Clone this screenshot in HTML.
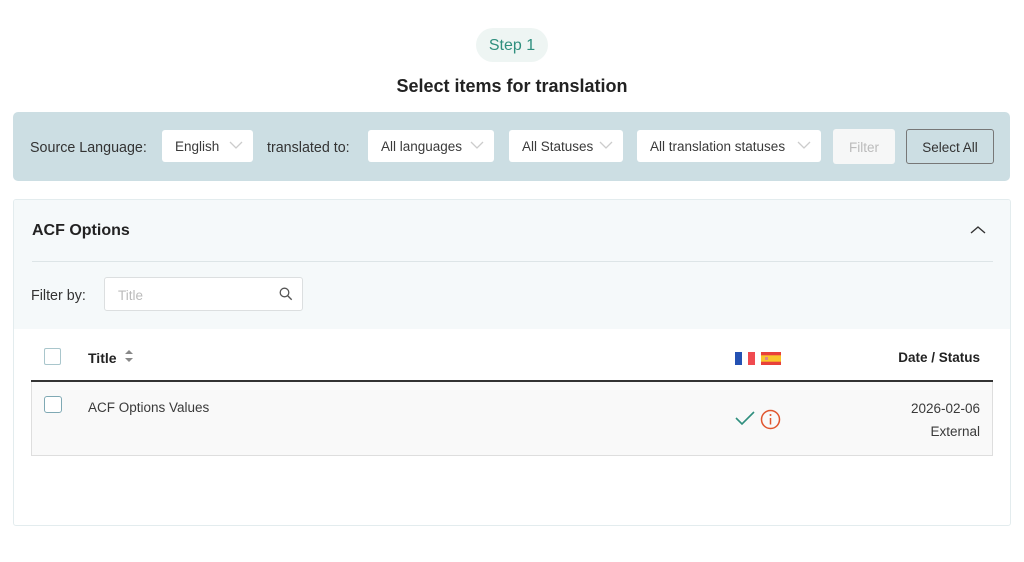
<!DOCTYPE html>
<html><head><meta charset="utf-8"><style>
*{box-sizing:border-box;margin:0;padding:0}
body{width:1024px;height:562px;background:#fff;font-family:"Liberation Sans",sans-serif;color:#333;position:relative;overflow:hidden}
.a{position:absolute}
.sel{position:absolute;background:#fff;border-radius:3px;height:32px;top:130px;font-size:13.5px;line-height:34px;padding-left:13px;color:#3a3a3a}
.sel svg{position:absolute;right:10px;top:11px}
</style></head><body>
<div class="a" style="left:476px;top:28px;width:72px;height:34px;border-radius:17px;background:#eef5f3;color:#2f8f7e;font-size:16px;line-height:36px;text-align:center">Step 1</div>
<div class="a" style="left:0;width:1024px;top:76px;text-align:center;font-size:18px;font-weight:bold;color:#222">Select items for translation</div>

<div class="a" style="left:13px;top:112px;width:997px;height:69px;background:#ccdee3;border-radius:5px"></div>
<div class="a" style="left:30px;top:140px;font-size:14.3px;color:#333">Source Language:</div>
<div class="sel" style="left:162px;width:91px">English<svg width="14" height="9"><path d="M1 1l6 6 6-6" fill="none" stroke="#ccc" stroke-width="1.3"/></svg></div>
<div class="a" style="left:267px;top:140px;font-size:14.3px;color:#333">translated to:</div>
<div class="sel" style="left:368px;width:126px">All languages<svg width="14" height="9"><path d="M1 1l6 6 6-6" fill="none" stroke="#ccc" stroke-width="1.3"/></svg></div>
<div class="sel" style="left:509px;width:114px">All Statuses<svg width="14" height="9"><path d="M1 1l6 6 6-6" fill="none" stroke="#ccc" stroke-width="1.3"/></svg></div>
<div class="sel" style="left:637px;width:184px">All translation statuses<svg width="14" height="9"><path d="M1 1l6 6 6-6" fill="none" stroke="#ccc" stroke-width="1.3"/></svg></div>
<div class="a" style="left:833px;top:129px;width:62px;height:35px;background:#f6f7f7;border-radius:3px;color:#bbb;font-size:13.5px;line-height:37px;text-align:center">Filter</div>
<div class="a" style="left:906px;top:129px;width:88px;height:35px;border:1px solid #777;border-radius:3px;color:#333;font-size:13.5px;line-height:35px;text-align:center">Select All</div>

<div class="a" style="left:13px;top:199px;width:998px;height:327px;border:1px solid #e3ecee;border-radius:3px;background:#fff;overflow:hidden">
<div style="height:129px;background:#f5f9fa"></div>
</div>
<div class="a" style="left:32px;top:222px;font-size:16px;font-weight:bold;color:#222">ACF Options</div>
<svg class="a" style="left:970px;top:225px" width="16" height="10"><path d="M1 8l7-6 7 6" fill="none" stroke="#333" stroke-width="1.4"/></svg>
<div class="a" style="left:32px;top:261px;width:961px;height:1px;background:#dde5e7"></div>
<div class="a" style="left:31px;top:288px;font-size:14.3px;color:#333">Filter by:</div>
<div class="a" style="left:104px;top:277px;width:199px;height:34px;background:#fff;border:1px solid #dcdfe0;border-radius:3px;font-size:13.5px;color:#bbb;line-height:35px;padding-left:13px">Title
<svg class="a" style="right:9px;top:9px" width="14" height="14"><circle cx="5.5" cy="5.5" r="4.3" fill="none" stroke="#555" stroke-width="1.3"/><path d="M8.7 8.7l4 4" stroke="#555" stroke-width="1.4"/></svg></div>

<div class="a" style="left:44px;top:348px;width:17px;height:17px;border:1px solid #a9c6cc;border-radius:2px;background:#fff"></div>
<div class="a" style="left:88px;top:350px;font-size:14px;font-weight:bold;color:#222">Title</div>
<svg class="a" style="left:124px;top:349px" width="10" height="14"><path d="M1 5l4-4 4 4z M1 9l4 4 4-4z" fill="#888"/></svg>
<svg class="a" style="left:735px;top:352px" width="20" height="13"><rect width="7" height="13" fill="#2451b3"/><rect x="7" width="6" height="13" fill="#fff"/><rect x="13" width="7" height="13" fill="#f04a50"/></svg>
<svg class="a" style="left:761px;top:352px" width="20" height="13"><rect width="20" height="13" fill="#e8403a"/><rect y="3.3" width="20" height="6.4" fill="#f9c52c"/><rect x="4" y="5" width="3" height="3" fill="#d88" /></svg>
<div class="a" style="left:860px;width:120px;top:350px;text-align:right;font-size:13.5px;font-weight:bold;color:#222">Date / Status</div>
<div class="a" style="left:31px;top:380px;width:962px;height:2px;background:#333"></div>

<div class="a" style="left:31px;top:382px;width:962px;height:74px;background:#f9f9f9;border:1px solid #dedede;border-top:none"></div>
<div class="a" style="left:44px;top:396px;width:18px;height:17px;border:1px solid #7fa9b4;border-radius:3px;background:#fff"></div>
<div class="a" style="left:88px;top:400px;font-size:13.5px;color:#3a3a3a">ACF Options Values</div>
<svg class="a" style="left:735px;top:410px" width="20" height="16"><path d="M1 8l6 6 12-12" fill="none" stroke="#2f8f7e" stroke-width="1.6"/></svg>
<svg class="a" style="left:760px;top:409px" width="21" height="21"><circle cx="10.5" cy="10.5" r="9" fill="none" stroke="#e0552e" stroke-width="1.5"/><path d="M10.5 9v6.5" stroke="#e0552e" stroke-width="1.5"/><circle cx="10.5" cy="6" r="1" fill="#e0552e"/></svg>
<div class="a" style="left:860px;width:120px;top:401px;text-align:right;font-size:13.5px;color:#3a3a3a">2026-02-06</div>
<div class="a" style="left:860px;width:120px;top:424px;text-align:right;font-size:13.5px;color:#3a3a3a">External</div>
</body></html>
